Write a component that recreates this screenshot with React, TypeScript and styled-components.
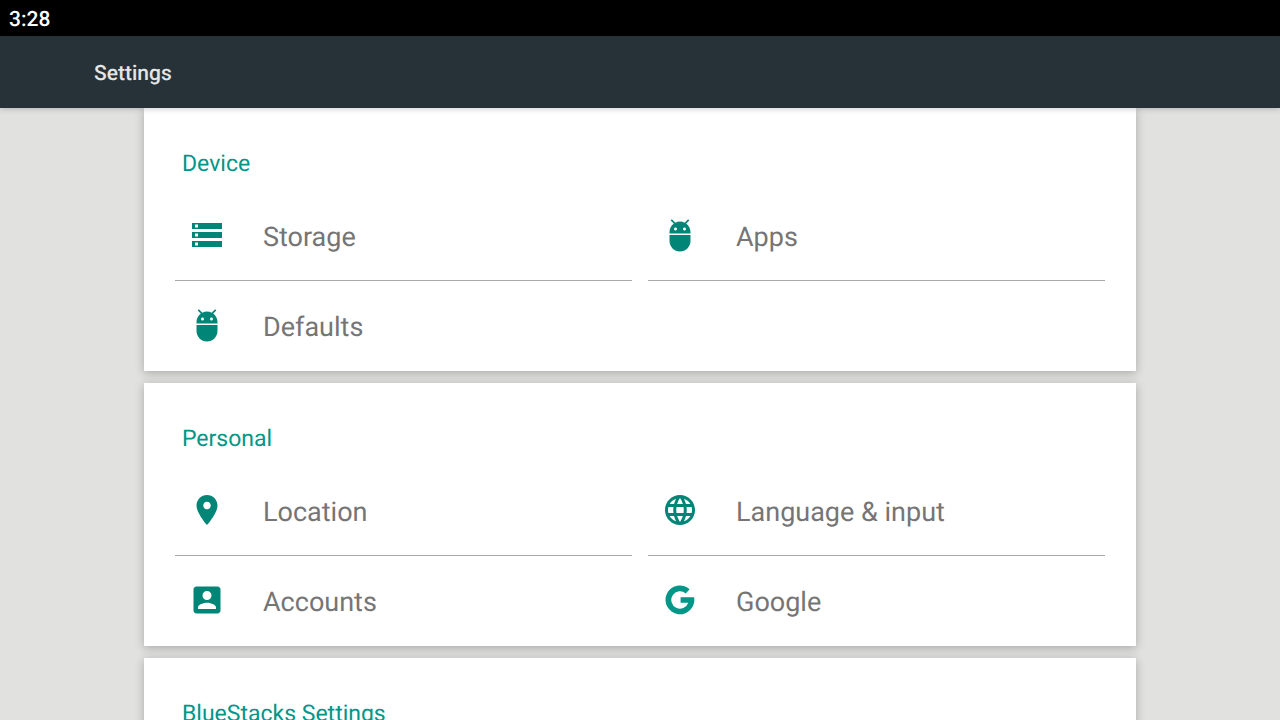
import React from "react";
import styled, { createGlobalStyle } from "styled-components";

const GlobalStyle = createGlobalStyle`
  * { box-sizing: border-box; }
  body {
    margin: 0;
    background: #e1e1df;
    font-family: Roboto, "Liberation Sans", sans-serif;
    text-rendering: geometricPrecision;
  }
`;

const Screen = styled.div`
  display: flex;
  flex-direction: column;
  height: 100vh;
  overflow: hidden;
`;

const StatusBar = styled.div`
  flex: none;
  height: 36px;
  padding: 0 9px;
  background: #000;
  color: #fff;
  font-size: 21px;
  font-weight: 500;
  line-height: 40px;
`;

const Toolbar = styled.header`
  position: relative;
  z-index: 1;
  flex: none;
  height: 72px;
  padding: 24px 94px 0;
  background: #273238;
  box-shadow: 0 1px 6px rgba(0, 0, 0, 0.2);
`;

const Title = styled.h1`
  margin: 0;
  color: #e4e5e5;
  font-size: 21px;
  font-weight: 500;
  line-height: 28px;
`;

const Content = styled.main`
  flex: 1;
  min-height: 0;
  display: flex;
  flex-direction: column;
  align-items: center;
  gap: 12px;
`;

const Card = styled.section`
  flex: none;
  width: 77.5%;
  padding: 0 31px;
  background: #fff;
  box-shadow: 0 2px 9px rgba(0, 0, 0, 0.25);
`;

const CardTitle = styled.h2`
  margin: 0;
  height: 83px;
  padding: 42px 7px 0;
  color: #009688;
  font-size: 23px;
  font-weight: 400;
  line-height: 28px;
`;

const Grid = styled.nav`
  display: grid;
  grid-template-columns: 1fr 1fr;
  column-gap: 16px;
`;

const Item = styled.a<{ $divided?: boolean }>`
  display: flex;
  align-items: flex-start;
  gap: 38px;
  height: 90px;
  padding: 26px 14px 0;
  border-bottom: ${(p) => (p.$divided ? "1px solid #a9a9a9" : "none")};
  color: #757575;
  font-size: 27px;
  line-height: 40px;
  text-decoration: none;
`;

const Icon = styled.svg<{ $tone?: string }>`
  flex: none;
  width: 36px;
  height: 36px;
  fill: ${(p) => p.$tone ?? "#008577"};
`;

const paths = {
  storage:
    "M2 20h20v-4H2v4zm2-3h2v2H4v-2zM2 4v4h20V4H2zm4 3H4V5h2v2zm-4 7h20v-4H2v4zm2-3h2v2H4v-2z",
  android:
    "M5 16c0 3.87 3.13 7 7 7s7-3.13 7-7v-4H5v4zM16.12 4.37l2.1-2.1-.82-.83-2.3 2.31C14.16 3.28 13.12 3 12 3s-2.16.28-3.09.75L6.6 1.44l-.82.83 2.1 2.1C6.14 5.64 5 7.68 5 10v1h14v-1c0-2.32-1.14-4.36-2.88-5.63zM9 9c-.55 0-1-.45-1-1s.45-1 1-1 1 .45 1 1-.45 1-1 1zm6 0c-.55 0-1-.45-1-1s.45-1 1-1 1 .45 1 1-.45 1-1 1z",
  place:
    "M12 2C8.13 2 5 5.13 5 9c0 5.25 7 13 7 13s7-7.75 7-13c0-3.87-3.13-7-7-7zm0 9.5c-1.38 0-2.5-1.12-2.5-2.5s1.12-2.5 2.5-2.5 2.5 1.12 2.5 2.5-1.12 2.5-2.5 2.5z",
  language:
    "M11.99 2C6.47 2 2 6.48 2 12s4.47 10 9.99 10C17.52 22 22 17.52 22 12S17.52 2 11.99 2zm6.93 6h-2.95c-.32-1.25-.78-2.45-1.38-3.56 1.84.63 3.37 1.91 4.33 3.56zM12 4.04c.83 1.2 1.48 2.53 1.91 3.96h-3.82c.43-1.43 1.08-2.76 1.91-3.96zM4.26 14C4.1 13.36 4 12.69 4 12s.1-1.36.26-2h3.38c-.08.66-.14 1.32-.14 2 0 .68.06 1.34.14 2H4.26zm.82 2h2.95c.32 1.25.78 2.45 1.38 3.56-1.84-.63-3.37-1.9-4.33-3.56zm2.95-8H5.08c.96-1.66 2.49-2.93 4.33-3.56C8.81 5.55 8.35 6.75 8.03 8zM12 19.96c-.83-1.2-1.48-2.53-1.91-3.96h3.82c-.43 1.43-1.08 2.76-1.91 3.96zM14.34 14H9.66c-.09-.66-.16-1.32-.16-2 0-.68.07-1.35.16-2h4.68c.09.65.16 1.32.16 2 0 .68-.07 1.34-.16 2zm.25 5.56c.6-1.11 1.06-2.31 1.38-3.56h2.95c-.96 1.65-2.49 2.93-4.33 3.56zM16.36 14c.08-.66.14-1.32.14-2 0-.68-.06-1.34-.14-2h3.38c.16.64.26 1.31.26 2s-.1 1.36-.26 2h-3.38z",
  account:
    "M3 5v14c0 1.1.89 2 2 2h14c1.1 0 2-.9 2-2V5c0-1.1-.9-2-2-2H5c-1.11 0-2 .9-2 2zm12 4c0 1.66-1.34 3-3 3s-3-1.34-3-3 1.34-3 3-3 3 1.34 3 3zm-9 8c0-2 4-3.1 6-3.1s6 1.1 6 3.1v1H6v-1z",
  google:
    "M18.4 4.8A9.6 9.6 0 1 0 21.4 10.2H12.4V13.8H17.5A5.8 5.8 0 1 1 15.8 7.6Z",
};

type Entry = { label: string; icon: keyof typeof paths; tone?: string };

const groups: { title: string; items: Entry[] }[] = [
  {
    title: "Device",
    items: [
      { label: "Storage", icon: "storage" },
      { label: "Apps", icon: "android" },
      { label: "Defaults", icon: "android" },
    ],
  },
  {
    title: "Personal",
    items: [
      { label: "Location", icon: "place" },
      { label: "Language & input", icon: "language" },
      { label: "Accounts", icon: "account" },
      { label: "Google", icon: "google", tone: "#009688" },
    ],
  },
  { title: "BlueStacks Settings", items: [] },
];

export default function App() {
  return (
    <Screen>
      <GlobalStyle />
      <StatusBar>3:28</StatusBar>
      <Toolbar>
        <Title>Settings</Title>
      </Toolbar>
      <Content>
        {groups.map((group) => (
          <Card key={group.title}>
            <CardTitle>{group.title}</CardTitle>
            {group.items.length > 0 && (
              <Grid aria-label={group.title}>
                {group.items.map((item, i) => (
                  <Item key={item.label} href="#" $divided={i < 2}>
                    <Icon viewBox="0 0 24 24" $tone={item.tone} aria-hidden="true">
                      <path d={paths[item.icon]} />
                    </Icon>
                    {item.label}
                  </Item>
                ))}
              </Grid>
            )}
          </Card>
        ))}
      </Content>
    </Screen>
  );
}
